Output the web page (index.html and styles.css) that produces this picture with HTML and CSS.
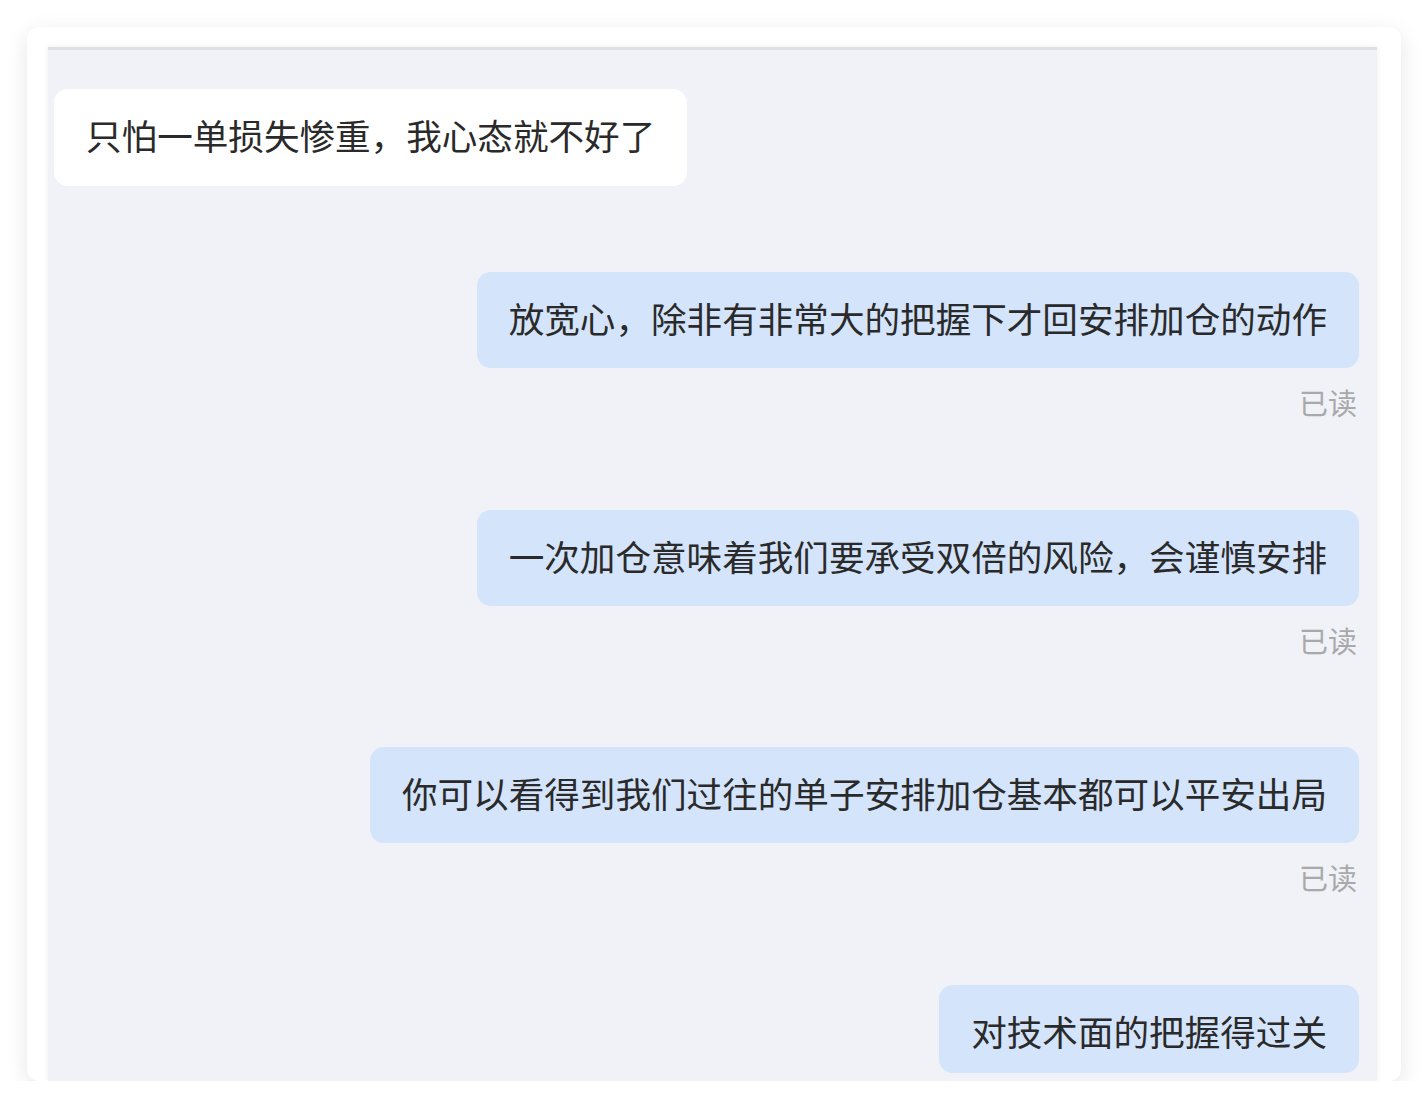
FILE: index.html
```html
<!DOCTYPE html>
<html lang="zh-CN">
<head>
<meta charset="utf-8">
<title>Chat</title>
<link rel="stylesheet" href="styles.css">
</head>
<body>
<div class="card">
  <div class="chat">
    <div class="msg msg-in">
      <div class="bubble bubble-in">只怕一单损失惨重，我心态就不好了</div>
    </div>
    <div class="msg msg-out">
      <div class="bubble bubble-out">放宽心，除非有非常大的把握下才回安排加仓的动作</div>
      <div class="read">已读</div>
    </div>
    <div class="msg msg-out">
      <div class="bubble bubble-out">一次加仓意味着我们要承受双倍的风险，会谨慎安排</div>
      <div class="read">已读</div>
    </div>
    <div class="msg msg-out">
      <div class="bubble bubble-out">你可以看得到我们过往的单子安排加仓基本都可以平安出局</div>
      <div class="read">已读</div>
    </div>
    <div class="msg msg-out">
      <div class="bubble bubble-out bubble-last">对技术面的把握得过关</div>
    </div>
  </div>
</div>
</body>
</html>
```

FILE: styles.css
```css
html, body {
  margin: 0;
  padding: 0;
  background: #ffffff;
}

body {
  padding: 27px 27px 0 27px;
  font-family: "Noto Sans CJK SC", "Noto Sans", sans-serif;
}

.card {
  width: 1374px;
  height: 1054px;
  box-sizing: border-box;
  background: #ffffff;
  border-radius: 12px;
  box-shadow: 0 6px 22px rgba(0, 0, 0, 0.1);
  padding: 20px 24px 0 21px;
  display: flex;
  flex-direction: column;
  overflow: hidden;
}

.chat {
  flex: 1;
  background: #f1f2f7;
  border-top: 3px solid #dfe0e6;
  box-shadow: 0 0 5px rgba(0, 0, 0, 0.08);
  padding: 39px 18px 0 6px;
  display: flex;
  flex-direction: column;
  gap: 86px;
  overflow: hidden;
}

.msg {
  display: flex;
  flex-direction: column;
}

.msg-in {
  align-items: flex-start;
}

.msg-out {
  align-items: flex-end;
}

.bubble {
  font-size: 35.6px;
  line-height: 48px;
  padding: 22px 32px 26px 32px;
  border-radius: 14px;
  color: #2a2a2a;
  white-space: nowrap;
}

.bubble-in {
  background: #ffffff;
  padding-bottom: 27px;
}

.bubble-out {
  background: #d4e4fa;
}

.bubble-last {
  padding-bottom: 18px;
}

.read {
  margin-top: 14px;
  font-size: 29px;
  line-height: 41.7px;
  color: #a9a9ab;
  padding-right: 2px;
}
```
